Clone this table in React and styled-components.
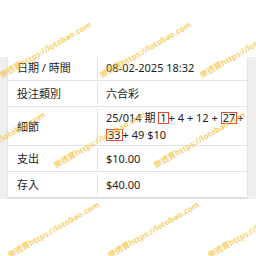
import React from "react"
import styled, { createGlobalStyle } from "styled-components"

const GlobalStyle = createGlobalStyle`
  html, body {
    margin: 0;
    padding: 0;
    background: #fff;
  }
  body {
    font-family: "Noto Sans", "Noto Sans CJK TC", sans-serif;
  }
`

const Page = styled.div`
  position: relative;
  width: 256px;
  height: 256px;
  overflow: hidden;
  padding-top: 57px;
  box-sizing: border-box;
`

const Panel = styled.div`
  background: #efefef;
  padding: 0 9px 2px 8px;
`

const Card = styled.div`
  background: #fff;
  box-shadow: 0 1px 2px rgba(0, 0, 0, 0.12);
`

const Row = styled.div`
  display: grid;
  grid-template-columns: 89px 1fr;
  padding: ${p => (p.$first ? "0 0 2px" : "2px 0")};
  border-bottom: ${p => (p.$last ? "none" : "1px solid #e3e3e3")};
  font-size: 11px;
  line-height: 17px;
  color: #222;
`

const Label = styled.div`
  display: flex;
  align-items: center;
  min-height: 21px;
  padding-left: 9px;
`

const Value = styled.div`
  display: flex;
  align-items: center;
  min-height: 21px;
  padding: 0 0 0 8px;
  border-left: 1px solid #dedede;
`

const Ball = styled.span`
  display: inline-block;
  line-height: 10px;
  padding: 0 1px;
  border: 1px solid #e84a35;
`

const Overlay = styled.div`
  position: absolute;
  inset: 0;
  pointer-events: none;
  overflow: hidden;
`

const Mark = styled.span`
  position: absolute;
  white-space: nowrap;
  font-size: 8px;
  font-weight: 700;
  line-height: 10px;
  color: rgba(244, 188, 40, 0.7);
  transform: rotate(-30deg);
  transform-origin: 0 100%;
`

const rows = [
  { label: "日期 / 時間", value: "08-02-2025 18:32" },
  { label: "投注類別", value: "六合彩" },
  {
    label: "細節",
    value: (
      <span>
        25/014 期 <Ball>1</Ball>+ 4 + 12 + <Ball>27</Ball>+ <Ball>33</Ball>+ 49 $10
      </span>
    ),
  },
  { label: "支出", value: "$10.00" },
  { label: "存入", value: "$40.00" },
]

const marks = []
for (let j = -2; j <= 3; j++) {
  for (let i = -2; i <= 3; i++) {
    marks.push({ x: 3 + 100 * i + 54 * j, y: 70 + 90 * j })
  }
}

export default function App() {
  return (
    <>
      <GlobalStyle />
      <Page>
        <Panel>
          <Card>
            {rows.map((row, idx) => (
              <Row key={row.label} $first={idx === 0} $last={idx === rows.length - 1}>
                <Label>{row.label}</Label>
                <Value>{row.value}</Value>
              </Row>
            ))}
          </Card>
        </Panel>
        <Overlay>
          {marks
            .filter(m => m.x > -130 && m.x < 256 && m.y > -10 && m.y < 320)
            .map(m => (
              <Mark key={`${m.x}-${m.y}`} style={{ left: m.x, top: m.y }}>
                樂透寶https://lotobao.com
              </Mark>
            ))}
        </Overlay>
      </Page>
    </>
  )
}
